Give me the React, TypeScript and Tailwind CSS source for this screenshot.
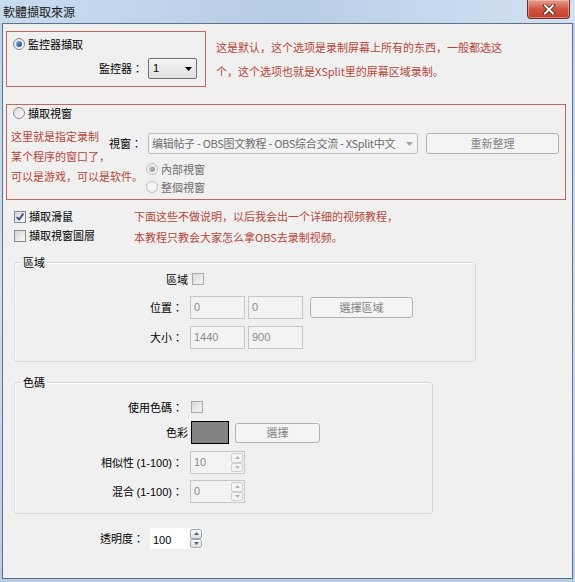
import React from 'react';

const tc = "font-['Noto_Sans_CJK_TC','Noto_Sans_CJK_SC',sans-serif]";
const sc = "font-['Noto_Sans_CJK_SC','Noto_Sans_CJK_TC',sans-serif]";

function Radio({ checked = false, disabled = false }: { checked?: boolean; disabled?: boolean }) {
  return (
    <span
      className={
        disabled
          ? 'flex h-[12px] w-[12px] shrink-0 items-center justify-center rounded-full border border-[#bcbcbc] bg-[#f4f4f4]'
          : 'flex h-[12px] w-[12px] shrink-0 items-center justify-center rounded-full border border-[#8a8a8a] bg-gradient-to-br from-[#dcdcdc] to-[#ffffff]'
      }
    >
      {checked && (
        <span
          className={
            disabled
              ? 'h-[6px] w-[6px] rounded-full bg-gradient-to-br from-[#d0d0d0] to-[#8c8c8c]'
              : 'h-[6px] w-[6px] rounded-full bg-gradient-to-br from-[#8cc3f0] to-[#0c3a70]'
          }
        />
      )}
    </span>
  );
}

function Check({ checked = false, disabled = false }: { checked?: boolean; disabled?: boolean }) {
  return (
    <span
      className={
        disabled
          ? 'flex h-[12px] w-[12px] shrink-0 items-center justify-center border border-[#a9a9a9] bg-gradient-to-br from-[#d9d9d9] to-[#f7f7f7]'
          : 'flex h-[12px] w-[12px] shrink-0 items-center justify-center border border-[#8a8a8a] bg-gradient-to-br from-[#d6d6d6] to-[#fbfbfb]'
      }
    >
      {checked && (
        <svg width="10" height="10" viewBox="0 0 10 10">
          <path d="M1.8 5 L4 7.6 L8.4 1.6" fill="none" stroke="#34488a" strokeWidth="1.8" />
        </svg>
      )}
    </span>
  );
}

function Field({ value, w = 'w-[55px]' }: { value: string; w?: string }) {
  return (
    <div className={`h-[23px] ${w} shrink-0 border border-[#c4c7ca] bg-[#f3f3f3] pl-[3px] pt-[2px] text-[11px] leading-[16px] text-[#8a8a8a] font-['Liberation_Sans',sans-serif]`}>
      {value}
    </div>
  );
}

function Arrow({ up, color }: { up: boolean; color: string }) {
  return (
    <svg width="5" height="3" viewBox="0 0 5 3">
      <path d={up ? 'M0 3 L2.5 0 L5 3 Z' : 'M0 0 L2.5 3 L5 0 Z'} fill={color} />
    </svg>
  );
}

function Spin({ value, disabled = false, w = 'w-[55px]' }: { value: string; disabled?: boolean; w?: string }) {
  const box = disabled
    ? `flex h-[23px] ${w} shrink-0 border border-[#c4c7ca] bg-[#f3f3f3]`
    : `flex h-[23px] ${w} shrink-0 border border-[#f0f0f0] bg-white`;
  const btn = disabled
    ? 'flex flex-1 items-center justify-center rounded-[2px] border border-[#cdd0d3] bg-[#f4f4f4]'
    : 'flex flex-1 items-center justify-center rounded-[2px] border border-[#a2a8b0] bg-gradient-to-b from-[#f7f7f7] to-[#dcdfe3]';
  const ac = disabled ? '#b5b5b5' : '#5c6470';
  return (
    <div className={box}>
      <span
        className={`flex-1 pl-[3px] text-[11px] leading-[16px] font-['Liberation_Sans',sans-serif] ${
          disabled ? 'text-[#8a8a8a] pt-[2px]' : 'text-black pt-[4px]'
        }`}
      >
        {value}
      </span>
      <div className="flex w-[13px] flex-col py-[1px] pr-[1px]">
        <span className={btn}>
          <Arrow up color={ac} />
        </span>
        <span className={btn}>
          <Arrow up={false} color={ac} />
        </span>
      </div>
    </div>
  );
}

function Btn({ label, w, h = 'h-[21px]' }: { label: string; w: string; h?: string }) {
  return (
    <div
      className={`flex ${h} ${w} shrink-0 items-center justify-center rounded-[3px] border border-[#adb2b6] bg-[#f4f4f4] text-[11px] text-[#838383] ${tc}`}
    >
      {label}
    </div>
  );
}

function Group({ title, h, w, children }: { title: string; h: string; w: string; children: React.ReactNode }) {
  return (
    <div className={`relative ml-[11px] ${w} ${h} rounded-[3px] border border-[#d5dadf] shadow-[inset_1px_1px_0_#ffffff]`}>
      <span className="absolute left-[6px] top-[-8px] bg-[#f0f0f0] px-[2px] text-[11px] leading-[14px] text-black">{title}</span>
      {children}
    </div>
  );
}

export default function App() {
  return (
    <div className={`flex h-[582px] w-[575px] flex-col overflow-hidden bg-gradient-to-b from-[#bcd2ea] via-[#cfdff0] to-[#b6cde6] ${tc}`}>
      {/* title bar */}
      <div className="relative flex h-[23px] shrink-0 items-center bg-gradient-to-r from-[#c9dbee] via-[#b7cde6] to-[#d3e2f2] pl-[3px]">
        <span className="text-[12px] leading-none text-[#1b1b1b]">軟體擷取來源</span>
        <div className="absolute right-[5px] top-0 flex h-[19px] w-[43px] items-center justify-center rounded-b-[4px] border border-t-0 border-[#6b2d25] bg-gradient-to-b from-[#e5a190] via-[#cf5540] to-[#c0402b] shadow-[inset_0_0_0_1px_rgba(255,200,190,0.5)]">
          <svg width="14" height="11" viewBox="0 0 14 11">
            <path d="M3 1.5 L11 9.5 M11 1.5 L3 9.5" stroke="#4a1a14" strokeWidth="3.6" strokeLinecap="square" />
            <path d="M3 1.5 L11 9.5 M11 1.5 L3 9.5" stroke="#ffffff" strokeWidth="2" strokeLinecap="square" />
          </svg>
        </div>
      </div>

      {/* client area */}
      <div className="ml-[2px] h-[556px] w-[571px] shrink-0 border border-[#5f7187] bg-[#f0f0f0] text-[11px] text-black">
        {/* monitor capture */}
        <div className="ml-[3px] mt-[7px] flex">
          <div className="h-[56px] w-[200px] shrink-0 border border-[#c4675b]">
            <div className="mt-[2px] flex h-[20px] items-center gap-[3px] pl-[6px]">
              <Radio checked />
              <span>監控器擷取</span>
            </div>
            <div className="mt-[4px] flex items-center justify-end gap-[5px] pr-[8px]">
              <span>監控器：</span>
              <div className="flex h-[21px] w-[49px] items-center justify-between rounded-[2px] border border-[#707070] bg-gradient-to-b from-[#f4f4f4] to-[#e0e0e0] pl-[4px] pr-[4px] font-['Liberation_Sans',sans-serif]">
                <span>1</span>
                <svg width="7" height="4" viewBox="0 0 7 4">
                  <path d="M0 0 L7 0 L3.5 4 Z" fill="#000" />
                </svg>
              </div>
            </div>
          </div>
          <div className={`ml-[10px] mt-[4px] leading-[24px] text-[#b4473a] ${sc}`}>
            <div>这是默认，这个选项是录制屏幕上所有的东西，一般都选这</div>
            <div>个，这个选项也就是XSplit里的屏幕区域录制。</div>
          </div>
        </div>

        {/* window capture */}
        <div className="ml-[3px] mt-[17px] h-[96px] w-[560px] border border-[#c4675b]">
          <div className="flex h-[16px] items-center gap-[3px] pl-[6px]">
            <Radio />
            <span>擷取視窗</span>
          </div>
          <div className="flex">
            <div className={`mt-[5px] w-[102px] shrink-0 whitespace-nowrap pl-[4px] leading-[20px] text-[#b4473a] ${sc}`}>
              <div>这里就是指定录制</div>
              <div>某个程序的窗口了，</div>
              <div>可以是游戏，可以是软件。</div>
            </div>
            <div className="mt-[12px]">
              <div className="flex items-center">
                <span className="w-[39px] shrink-0">視窗：</span>
                <div className="flex h-[21px] w-[270px] items-center justify-between rounded-[2px] border border-[#b9bdc1] bg-[#f4f4f4] pl-[3px] pr-[4px] text-[#6d6d6d]">
                  <span className="whitespace-nowrap tracking-[-0.3px]">编辑帖子 - OBS图文教程 - OBS综合交流 - XSplit中文</span>
                  <svg width="7" height="4" viewBox="0 0 7 4">
                    <path d="M0 0 L7 0 L3.5 4 Z" fill="#a5a5a5" />
                  </svg>
                </div>
                <Btn label="重新整理" w="w-[133px] ml-[8px]" />
              </div>
              <div className="ml-[37px] mt-[6px] text-[#6d6d6d]">
                <div className="flex h-[18px] items-center gap-[3px]">
                  <Radio checked disabled />
                  <span>內部視窗</span>
                </div>
                <div className="flex h-[18px] items-center gap-[3px]">
                  <Radio disabled />
                  <span>整個視窗</span>
                </div>
              </div>
            </div>
          </div>
        </div>

        {/* mouse / layered */}
        <div className="mt-[7px] flex">
          <div className="ml-[11px] w-[120px] shrink-0">
            <div className="flex h-[19px] items-center gap-[3px]">
              <Check checked />
              <span>擷取滑鼠</span>
            </div>
            <div className="flex h-[19px] items-center gap-[3px]">
              <Check />
              <span>擷取視窗圖層</span>
            </div>
          </div>
          <div className={`leading-[21px] text-[#b4473a] ${sc}`}>
            <div className="-mt-[1px]">下面这些不做说明，以后我会出一个详细的视频教程，</div>
            <div>本教程只教会大家怎么拿OBS去录制视频。</div>
          </div>
        </div>

        {/* region */}
        <div className="mt-[14px]">
          <Group title="區域" w="w-[462px]" h="h-[100px]">
            <div className="mt-[8px] flex h-[16px] items-center">
              <span className="w-[173px] shrink-0 text-right">區域</span>
              <span className="ml-[4px]">
                <Check disabled />
              </span>
            </div>
            <div className="mt-[9px] flex items-center">
              <span className="w-[168px] shrink-0 text-right">位置：</span>
              <span className="ml-[7px] flex gap-[3px]">
                <Field value="0" />
                <Field value="0" />
              </span>
              <Btn label="選擇區域" w="w-[103px] ml-[7px]" />
            </div>
            <div className="mt-[7px] flex items-center">
              <span className="w-[168px] shrink-0 text-right">大小：</span>
              <span className="ml-[7px] flex gap-[3px]">
                <Field value="1440" />
                <Field value="900" />
              </span>
            </div>
          </Group>
        </div>

        {/* color key */}
        <div className="mt-[20px]">
          <Group title="色碼" w="w-[419px]" h="h-[132px]">
            <div className="mt-[16px] flex h-[16px] items-center">
              <span className="w-[168px] shrink-0 text-right">使用色碼：</span>
              <span className="ml-[8px]">
                <Check disabled />
              </span>
            </div>
            <div className="mt-[6px] flex items-center">
              <span className="w-[173px] shrink-0 text-right">色彩</span>
              <span className="ml-[3px] h-[23px] w-[38px] shrink-0 border border-black bg-[#838383]" />
              <Btn label="選擇" w="w-[85px] ml-[6px]" h="h-[20px]" />
            </div>
            <div className="mt-[7px] flex items-center">
              <span className="w-[168px] shrink-0 text-right">
                相似性 <span className="font-['Liberation_Sans',sans-serif]">(1-100)</span>：
              </span>
              <span className="ml-[7px]">
                <Spin value="10" disabled />
              </span>
            </div>
            <div className="mt-[6px] flex items-center">
              <span className="w-[168px] shrink-0 text-right">
                混合 <span className="font-['Liberation_Sans',sans-serif]">(1-100)</span>：
              </span>
              <span className="ml-[7px]">
                <Spin value="0" disabled />
              </span>
            </div>
          </Group>
        </div>

        {/* opacity */}
        <div className="mt-[13px] flex items-center">
          <span className="w-[141px] shrink-0 text-right">透明度：</span>
          <span className="ml-[5px]">
            <Spin value="100" />
          </span>
        </div>
      </div>
    </div>
  );
}
